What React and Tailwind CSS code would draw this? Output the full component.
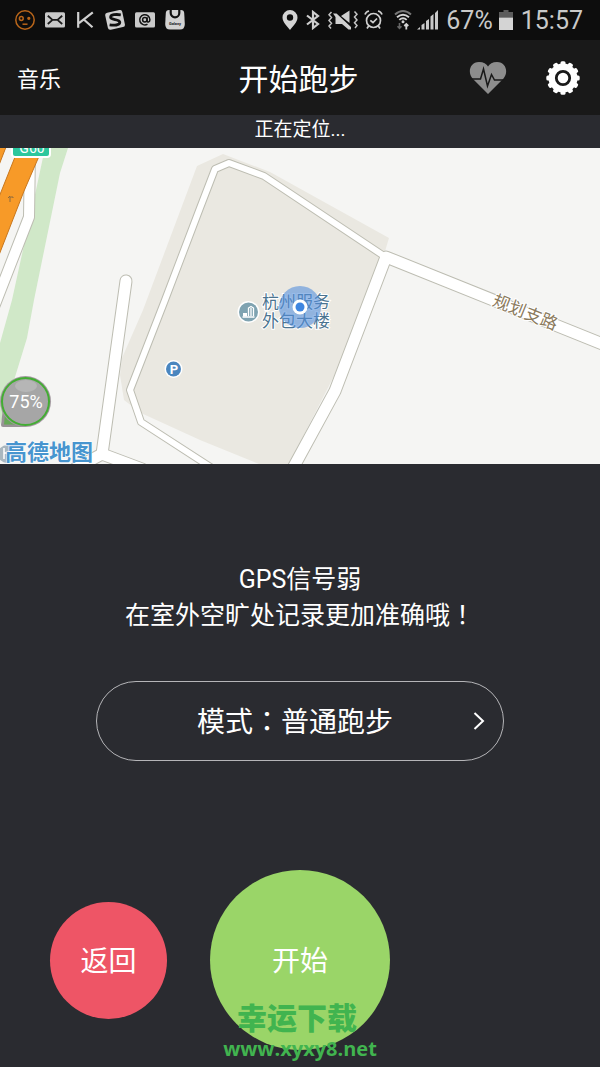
import React from 'react';

const TEETH = [0, 30, 60, 90, 120, 150, 180, 210, 240, 270, 300, 330];

const NotificationIcons = () => (
  <div className="flex items-center gap-[10px]">
    {/* Smiley */}
    <svg width="20" height="20" viewBox="0 0 20 20" fill="none" stroke="#b8651a" strokeWidth="1.5">
      <circle cx="10" cy="10" r="9.2" />
      <circle cx="6.3" cy="8.5" r="1.9" />
      <circle cx="13.8" cy="8.3" r="0.9" fill="#b8651a" />
      <path d="M7.5 14.2h5" />
    </svg>
    {/* Mail */}
    <svg width="20" height="20" viewBox="0 0 20 20">
      <rect x="0" y="2.3" width="20" height="15.2" rx="1.5" fill="#c9c9c9" />
      <path d="M2.8 5.8 L7.5 9.9 H12.5 L17.2 5.8 M2.8 14 L7.5 9.9 M12.5 9.9 L17.2 14" fill="none" stroke="#1a1a1a" strokeWidth="1.8" />
    </svg>
    {/* K */}
    <svg width="20" height="20" viewBox="0 0 20 20" fill="none" stroke="#cfcfcf" strokeWidth="2.2">
      <path d="M3.2 2v15.8M17.8 2.3 L4 13.2 M8.5 9.3 L17.5 17.3" />
    </svg>
    {/* S */}
    <svg width="20" height="20" viewBox="0 0 20 20">
      <rect x="1.4" y="1.2" width="17.4" height="17.4" rx="2.5" fill="#cfcfcf" transform="rotate(-12 10 10)" />
      <path d="M15.8 4.8 C11 4.2 5.6 4.4 5.6 7.3 C5.6 10.2 14.8 8.8 14.8 12.2 C14.8 15.4 9 15.6 4.6 14.8" fill="none" stroke="#111" strokeWidth="2.8" />
    </svg>
    {/* @ */}
    <svg width="20" height="20" viewBox="0 0 20 20">
      <rect x="0" y="2.3" width="20" height="15.2" rx="1.5" fill="#c9c9c9" />
      <g fill="none" stroke="#111" strokeWidth="1.5">
        <circle cx="9.8" cy="9.8" r="2.2" />
        <path d="M12.1 7.2v3.8c0 1.6 2.8 1.5 2.8-1.2a5.1 5.1 0 1 0-2.4 4.3" />
      </g>
    </svg>
    {/* Galaxy store */}
    <svg width="20" height="20" viewBox="0 0 20 20">
      <path d="M4 0 H16 Q19 0 19.2 3 L19.8 14 Q19.8 19.5 15 19.5 H5 Q0.2 19.5 0.2 14 L0.8 3 Q1 0 4 0Z" fill="#d2d2d2" />
      <path d="M5.7 0 V3 a4.3 4.3 0 0 0 8.6 0 V0" fill="none" stroke="#111" strokeWidth="2.2" />
      <text x="10" y="15" textAnchor="middle" fontSize="4" fontWeight="700" fill="#222">Galaxy</text>
    </svg>
  </div>
);

const SystemIcons = () => (
  <div className="flex items-center text-[25px] leading-none text-[#c9c9c9]">
    <svg className="mr-2" width="16" height="20" viewBox="0 0 16 20" fill="#d4d4d4">
      <path fillRule="evenodd" d="M8 0a7.5 7.5 0 0 1 7.5 7.5C15.5 12 11 16 8 20C5 16 .5 12 .5 7.5A7.5 7.5 0 0 1 8 0ZM8 4.3a3.2 3.2 0 1 0 0 6.4a3.2 3.2 0 0 0 0-6.4Z" />
    </svg>
    <svg className="mr-2" width="14" height="20" viewBox="0 0 14 20" fill="none" stroke="#cfcfcf" strokeWidth="2.2">
      <path d="M1 5.5 L12 14 L7 18 V2 L12 6 L1 14.5" />
    </svg>
    {/* Vibrate / muted */}
    <svg className="mr-[6px]" width="30" height="20" viewBox="0 0 30 20" fill="#d0d0d0">
      <path d="M13 6 L21.5 0.5 V13Z" />
      <path d="M5 3.5 H8.5 L23 17 V19.5 H20.5 L14 14 H7.5 V7Z" />
      <path d="M3.5 2 L1 4.8 L3.5 7.6 L1 10.4 L3.5 13.2 L1 16 L3 18.5 M26.5 1.5 L29 4.3 L26.5 7.1 L29 9.9 L26.5 12.7 L29 15.5 L27 18" fill="none" stroke="#c4c4c4" strokeWidth="1.5" />
    </svg>
    {/* Alarm */}
    <svg className="mr-[11px]" width="19" height="20" viewBox="0 0 19 20" fill="none" stroke="#d0d0d0" strokeWidth="1.7">
      <circle cx="9.5" cy="10.5" r="7" />
      <path d="M6.3 10.3 L9 12.5 L13 8.5 M1 4.5 Q1.8 1.8 5 1 M18 4.5 Q17.2 1.8 14 1 M4.8 15.8 L3 18.5 M14.2 15.8 L16 18.5" />
    </svg>
    {/* Wifi */}
    <svg className="mr-[5px]" width="18" height="20" viewBox="0 0 18 20" fill="none" strokeWidth="1.9">
      <path d="M1 4.5 Q9 -2.5 17 4.5" stroke="#777" />
      <path d="M3 7.3 Q9 2 15 7.3 M5.3 9.9 Q9 6.5 12.7 9.9" stroke="#d4d4d4" />
      <circle cx="9" cy="11.8" r="1.5" fill="#d4d4d4" />
      <path d="M5.5 13v5M3.5 16.3l2 2l2-2" stroke="#666" strokeWidth="1.6" />
      <path d="M12.3 19.5v-5M10.3 16l2-2l2 2" stroke="#d4d4d4" strokeWidth="1.8" />
    </svg>
    {/* Signal */}
    <svg className="mr-2" width="21" height="20" viewBox="0 0 21 20" fill="#c9c9c9">
      <path d="M0 19.5L3 17v2.5ZM4.5 19.5V15L7.5 13v6.5ZM9 19.5V11L12 9v10.5ZM13.5 19.5V6.5L16.5 4v15.5ZM18 19.5V3L21 0v19.5Z" />
    </svg>
    <span>67%</span>
    <svg className="ml-[6px] mr-2" width="14" height="20" viewBox="0 0 14 20">
      <path d="M0 2 H4.5 V0 H9.5 V2 H14 V7.5 H0Z" fill="#5c5c5c" />
      <rect y="7.5" width="14" height="12.5" fill="#d4d4d4" />
    </svg>
    <span>15:57</span>
  </div>
);

const HeartIcon = () => (
  <svg width="38" height="32" viewBox="0 0 38 32">
    <path d="M19 32 L3.5 16.5 C-1.5 11 .5 0 10 0 C14.5 0 17.5 2 19 4.5 C20.5 2 23.5 0 28 0 C37.5 0 39.5 11 34.5 16.5Z" fill="#8d8d8d" />
    <path d="M3 17 H11.5 L14.5 7 L18.5 24 L22.5 12.5 L25.5 18 H35" fill="none" stroke="#191919" strokeWidth="1.5" />
  </svg>
);

const GearIcon = () => (
  <svg width="34" height="34" viewBox="-17 -17 34 34">
    <circle r="14.5" fill="#fff" />
    {TEETH.map((deg) => (
      <rect key={deg} x="-2.5" y="-16.7" width="5" height="6" rx="1.5" fill="#fff" transform={`rotate(${deg})`} />
    ))}
    <circle r="6.7" fill="none" stroke="#191919" strokeWidth="2.8" />
  </svg>
);

// Every road is stroked twice: wide for the casing, narrow for the surface
const ROADS = [
  { points: '30,150 29,217 -8,312', width: 11 },
  { points: '384,256 264,176 229,163 215,169 200,208 165,300 130,390 141,422 212,468', width: 7 },
  { points: '126,281 102,454', width: 12 },
  { points: '76,468 102,454 142,469', width: 12 },
  { points: '620,351 386,257 335,391 292,470', width: 12 },
];

const MapView = () => (
  <svg
    className="block h-[316px] w-full bg-[#f5f5f3]"
    viewBox="0 148 600 316"
    preserveAspectRatio="xMidYMid slice"
    role="img"
    aria-label="地图"
  >
    <path d="M45 148H68L60 173L34 300L27 338L15 377L0 425V343L12 300L36 190Z" fill="#d0e8c8" />
    <path d="M197 166L223 154L270 172L389 238L383 258L359 327L289 464H259L200 440L141 413L124 400L120 375L122 358L143 310Z" fill="#eae8e1" />

    <g fill="none" strokeLinejoin="round" strokeLinecap="round">
      {ROADS.map((road) => (
        <polyline key={road.points} points={road.points} stroke="#bdbdb2" strokeWidth={road.width + 1} />
      ))}
      {ROADS.map((road) => (
        <polyline key={road.points} points={road.points} stroke="#fff" strokeWidth={road.width - 1} />
      ))}
    </g>

    {/* Motorway */}
    <path d="M19 147L-1 197V255L24 191L43 147Z M-1 165V147H6Z" fill="#f79a28" stroke="#c8771d" />
    <path d="M10 202v-5h3v1M8 198l2-2" fill="none" stroke="#8d6a3c" />
    <rect x="12" y="138" width="38" height="19" rx="3" fill="#2cc79d" stroke="#fff" strokeWidth="2" />
    <text x="32" y="153" textAnchor="middle" fontSize="14" fill="#fff">G60</text>

    <text
      transform="translate(525 313) rotate(22)"
      textAnchor="middle"
      y="5"
      fontSize="17"
      fill="#8b7a5c"
      stroke="#fff"
      strokeWidth="2"
      paintOrder="stroke"
    >
      规划支路
    </text>

    {/* Parking */}
    <circle cx="173.5" cy="369" r="9" fill="#fff" />
    <circle cx="173.5" cy="369" r="7.5" fill="#4a86bf" />
    <text x="174" y="374" textAnchor="middle" fontSize="13" fontWeight="700" fill="#fff">P</text>

    {/* Office building */}
    <circle cx="248.5" cy="312" r="11" fill="#fff" />
    <circle cx="248.5" cy="312" r="9.5" fill="#7fa3b1" />
    <path d="M243 316.5V313H247V316.5Z" fill="#fff" />
    <path d="M242.5 317H254.5M248.5 316V308L251 306.5L253.5 308V316M251 308V316" fill="none" stroke="#fff" strokeWidth="1.3" />
    <g fontSize="17" fill="#4b7490" stroke="#fff" strokeWidth="2" paintOrder="stroke">
      <text x="262" y="308">杭州服务</text>
      <text x="262" y="327">外包大楼</text>
    </g>

    {/* Current position */}
    <circle cx="300" cy="307" r="21" fill="#5590dc" fillOpacity="0.6" />
    <circle cx="300" cy="307" r="7.5" fill="#fff" />
    <circle cx="300" cy="307" r="4.5" fill="#3f86e0" />

    {/* Floating battery bubble */}
    <path d="M3 408L1 425Q1 427 3 427H26Z" fill="#999396" />
    <path d="M5 414L4 424.5H20Z" fill="#67a857" />
    <circle cx="25.5" cy="401.5" r="25.5" fill="#a39aa0" />
    <circle cx="25.5" cy="401.5" r="23.5" fill="#a6a6a6" stroke="#43ad33" strokeWidth="2" />
    <ellipse cx="26" cy="386" rx="11" ry="6" fill="#fff" fillOpacity="0.18" />
    <text x="26" y="408" textAnchor="middle" fontSize="18" fill="#fff">75%</text>

    <circle cx="7" cy="454" r="9" fill="#a9b7bf" />
    <path d="M4 448v11M10 448v11M4 453h6" stroke="#fff" strokeWidth="1.5" />
    <text x="5" y="460" fontSize="22" fontWeight="700" fill="#4795cf" stroke="#fff" strokeWidth="1" paintOrder="stroke">
      高德地图
    </text>
  </svg>
);

const App = () => {
  return (
    <div
      lang="zh-CN"
      className="flex min-h-screen flex-col overflow-hidden bg-[#2a2b30] font-[Roboto,'Noto_Sans_CJK_SC',sans-serif] text-white"
    >
      {/* Status bar */}
      <div className="flex h-10 items-center justify-between bg-[#0d0d0d] pl-[15px] pr-[17px]">
        <NotificationIcons />
        <SystemIcons />
      </div>

      {/* Header */}
      <header className="grid h-[75px] grid-cols-[1fr_auto_1fr] items-center bg-[#191919] pl-[17px] pr-5">
        <button className="justify-self-start pt-1 text-[22px]">音乐</button>
        <h1 className="pt-1 text-[30px]">开始跑步</h1>
        <div className="flex items-center gap-[39px] justify-self-end">
          <button aria-label="心率">
            <HeartIcon />
          </button>
          <button aria-label="设置">
            <GearIcon />
          </button>
        </div>
      </header>

      <p className="h-[33px] text-center text-[19px] leading-[30px]">正在定位...</p>

      <MapView />

      {/* GPS hint */}
      <main className="flex flex-col items-center pt-[98px]">
        <p className="text-center text-[25px] leading-9">
          GPS信号弱
          <br />
          在室外空旷处记录更加准确哦<span className="font-['Noto_Sans_CJK_TC'] leading-none" lang="zh-TW">！</span>
        </p>

        <button className="mt-[47px] flex h-20 w-[68%] items-center rounded-full border border-[#b5b5b8] pl-5 pr-[18px] text-[28px]">
          <span className="flex-1 pt-1 text-center">
            模式<span className="font-['Noto_Sans_CJK_TC'] leading-none" lang="zh-TW">：</span>普通跑步
          </span>
          <svg width="12" height="18" viewBox="0 0 12 18" fill="none" stroke="#fff" strokeWidth="2">
            <path d="M1.5 1L10 9L1.5 17" />
          </svg>
        </button>
      </main>

      {/* Actions */}
      <div className="relative mt-[109px] grid grid-cols-[1fr_auto_1fr] items-center pb-[17px] text-[28px]">
        <button className="mr-[43px] size-[117px] justify-self-end rounded-full bg-[#ee5566] pt-1">返回</button>
        <button className="size-[180px] rounded-full bg-[#9ad568] pt-1">开始</button>
        <div className="pointer-events-none absolute inset-x-0 bottom-1 text-center font-bold text-[#41b44f]">
          <p className="pr-[6px] text-[30px] font-black leading-8">幸运下载</p>
          <p className="font-['Open_Sans',sans-serif] text-[20px] leading-7">www.xyxy8.net</p>
        </div>
      </div>
    </div>
  );
};

export default App;
